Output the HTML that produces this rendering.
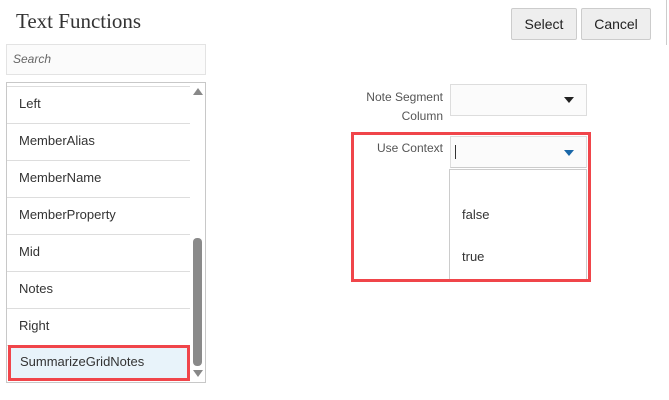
<!DOCTYPE html>
<html><head><style>
body{margin:0;width:669px;height:400px;background:#fff;font-family:"Liberation Sans",sans-serif;position:relative;overflow:hidden;color:#333}
.a{position:absolute}
.row{position:absolute;left:7px;width:183px;height:37px;border-bottom:1px solid #ddd;font-size:13px;line-height:33px;padding-left:12px;box-sizing:border-box;color:#333}
.btn{position:absolute;top:8px;height:32px;background:#eee;border:1px solid #ccc;border-radius:2px;box-sizing:border-box;font-size:14px;line-height:30px;text-align:center;color:#222}
</style></head><body>
<div class="a" style="left:16px;top:9px;font-family:'Liberation Serif',serif;font-size:21px;color:#333">Text Functions</div>
<div class="btn" style="left:511px;width:66px">Select</div>
<div class="btn" style="left:581px;width:70px">Cancel</div>
<div class="a" style="left:666px;top:0;width:1px;height:45px;background:#ccc"></div>
<div class="a" style="left:6px;top:44px;width:200px;height:31px;border:1px solid #e3e3e3;background:#fbfbfb;box-sizing:border-box;font-size:12px;font-style:italic;color:#666;line-height:29px;padding-left:6px">Search</div>
<div class="a" style="left:6px;top:82px;width:200px;height:301px;border:1px solid #c8c8c8;box-sizing:border-box"></div>
<div class="a" style="left:7px;top:86px;width:183px;height:1px;background:#ddd"></div>
<div class="row" style="top:87px">Left</div>
<div class="row" style="top:124px">MemberAlias</div>
<div class="row" style="top:161px">MemberName</div>
<div class="row" style="top:198px">MemberProperty</div>
<div class="row" style="top:235px">Mid</div>
<div class="row" style="top:272px">Notes</div>
<div class="row" style="top:309px">Right</div>
<div class="a" style="left:8px;top:345px;width:182px;height:36px;background:#e8f3fa;border:3px solid #f0454a;box-sizing:border-box;font-size:13px;line-height:28px;padding-left:9px">SummarizeGridNotes</div>
<div class="a" style="left:193px;top:238px;width:9px;height:128px;background:#8a8a8a;border-radius:4px"></div>
<div class="a" style="left:193px;top:88px;width:0;height:0;border-left:5px solid transparent;border-right:5px solid transparent;border-bottom:7px solid #888"></div>
<div class="a" style="left:193px;top:370px;width:0;height:0;border-left:5px solid transparent;border-right:5px solid transparent;border-top:7px solid #888"></div>
<div class="a" style="left:340px;top:88px;width:103px;text-align:right;font-size:12px;line-height:19px;color:#555">Note Segment<br>Column</div>
<div class="a" style="left:450px;top:84px;width:137px;height:32px;border:1px solid #ddd;background:#fbfbfb;box-sizing:border-box"></div>
<div class="a" style="left:564px;top:97px;border-left:5px solid transparent;border-right:5px solid transparent;border-top:6px solid #222"></div>
<div class="a" style="left:351px;top:132px;width:240px;height:150px;border:3px solid #f0454a;box-sizing:border-box"></div>
<div class="a" style="left:340px;top:141px;width:103px;text-align:right;font-size:12px;color:#555">Use Context</div>
<div class="a" style="left:450px;top:136px;width:137px;height:32px;border:1px solid #ddd;border-bottom:1px solid #ccc;background:#fbfbfb;box-sizing:border-box"></div>
<div class="a" style="left:455px;top:145px;width:1px;height:14px;background:#333"></div>
<div class="a" style="left:564px;top:150px;border-left:5px solid transparent;border-right:5px solid transparent;border-top:6px solid #1a67a8"></div>
<div class="a" style="left:449px;top:169px;width:138px;height:110px;border:1px solid #ccc;border-bottom:none;background:#fff;box-sizing:border-box"></div>
<div class="a" style="left:462px;top:207px;font-size:13px;color:#333">false</div>
<div class="a" style="left:462px;top:249px;font-size:13px;color:#333">true</div>
</body></html>
